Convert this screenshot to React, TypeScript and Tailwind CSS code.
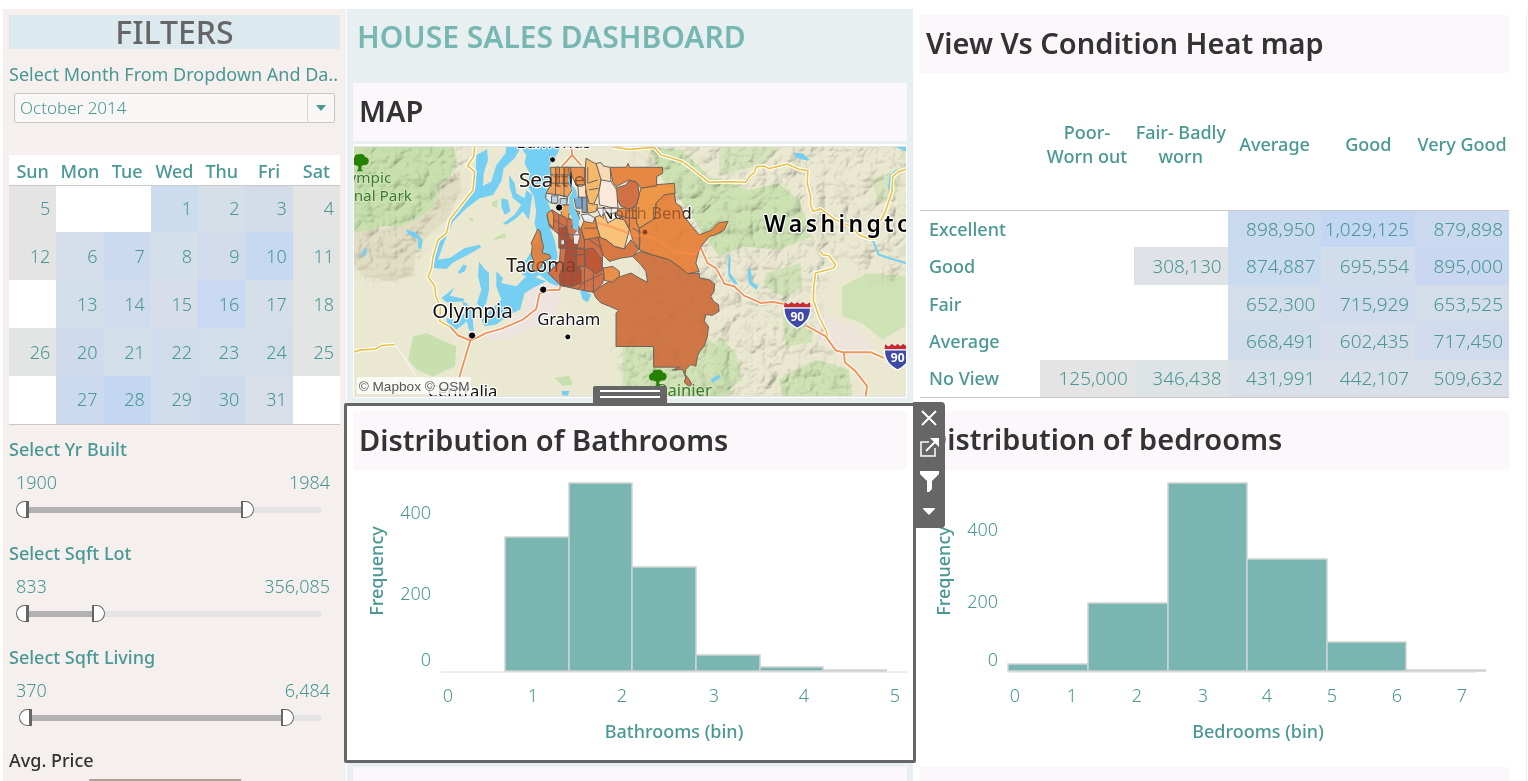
import React, { useId, useState } from "react";

type Cell = { text: string; tone: string };

const c = (text: string, tone = "bg-white"): Cell => ({ text, tone });

const weekdays = ["Sun", "Mon", "Tue", "Wed", "Thu", "Fri", "Sat"];

const weeks: Cell[][] = [
  [c("5", "bg-[#e4e4e4]"), c(""), c(""), c("1", "bg-[#cddbee]"), c("2", "bg-[#d5dfe7]"), c("3", "bg-[#d3dde9]"), c("4", "bg-[#e4e4e4]")],
  [c("12", "bg-[#e4e4e4]"), c("6", "bg-[#d3deea]"), c("7", "bg-[#ccdaf0]"), c("8", "bg-[#d3dfe9]"), c("9", "bg-[#d1dbec]"), c("10", "bg-[#c7d8f1]"), c("11", "bg-[#e2e4e4]")],
  [c(""), c("13", "bg-[#d2deea]"), c("14", "bg-[#d0dbed]"), c("15", "bg-[#d8dee9]"), c("16", "bg-[#c9d9f1]"), c("17", "bg-[#d6deea]"), c("18", "bg-[#e2e5e4]")],
  [c("26", "bg-[#e2e5e4]"), c("20", "bg-[#cfdbed]"), c("21", "bg-[#d3dfe8]"), c("22", "bg-[#d0dbec]"), c("23", "bg-[#d2deea]"), c("24", "bg-[#d4dee9]"), c("25", "bg-[#e2e5e4]")],
  [c(""), c("27", "bg-[#ccdaef]"), c("28", "bg-[#c3d6f2]"), c("29", "bg-[#d1dcec]"), c("30", "bg-[#cddbed]"), c("31", "bg-[#d8dfe9]"), c("")],
];

const conditions = ["Poor-\nWorn out", "Fair- Badly\nworn", "Average", "Good", "Very Good"];

const views: { name: string; cells: Cell[] }[] = [
  { name: "Excellent", cells: [c(""), c(""), c("898,950", "bg-[#c9d9f0]"), c("1,029,125", "bg-[#c3d6f2]"), c("879,898", "bg-[#cad9f0]")] },
  { name: "Good", cells: [c(""), c("308,130", "bg-[#dfe2e6]"), c("874,887", "bg-[#cadaef]"), c("695,554", "bg-[#d2ddec]"), c("895,000", "bg-[#c9d8f0]")] },
  { name: "Fair", cells: [c(""), c(""), c("652,300", "bg-[#d3deea]"), c("715,929", "bg-[#d0dbed]"), c("653,525", "bg-[#d3deea]")] },
  { name: "Average", cells: [c(""), c(""), c("668,491", "bg-[#d2ddeb]"), c("602,435", "bg-[#d5deea]"), c("717,450", "bg-[#d0dbed]")] },
  { name: "No View", cells: [c("125,000", "bg-[#e4e4e4]"), c("346,438", "bg-[#dee3e5]"), c("431,991", "bg-[#d9e0e8]"), c("442,107", "bg-[#d9e0e8]"), c("509,632", "bg-[#d8dfe9]")] },
];

function PanelTitle({ children, tall = false }: { children: React.ReactNode; tall?: boolean }) {
  return (
    <h2
      className={`flex shrink-0 items-center bg-[#fbf7fb] px-[6px] pb-[2px] text-[29px] leading-[36px] font-semibold whitespace-nowrap text-[#333333] ${tall ? "h-[59px]" : "h-[58px]"}`}
    >
      {children}
    </h2>
  );
}

type RangeProps = { label: string; min: number; max: number; from: number; to: number; grouped?: boolean };

const rangeInput =
  "pointer-events-none absolute inset-0 m-0 h-[17px] w-full appearance-none bg-transparent outline-none [&::-webkit-slider-thumb]:pointer-events-auto [&::-webkit-slider-thumb]:h-[17px] [&::-webkit-slider-thumb]:w-[13px] [&::-webkit-slider-thumb]:appearance-none [&::-webkit-slider-thumb]:border-[#666666] [&::-webkit-slider-thumb]:bg-white";

function RangeFilter({ label, min, max, from, to, grouped = true }: RangeProps) {
  const id = useId();
  const [low, setLow] = useState(from);
  const [high, setHigh] = useState(to);
  const share = (v: number) => ((v - min) / (max - min)) * 96;
  const show = (v: number) => (grouped ? Math.round(v).toLocaleString("en-US") : String(Math.round(v)));
  return (
    <div>
      <label htmlFor={id} className="block text-[18px] leading-6 font-medium">
        {label}
      </label>
      <div className="mt-[9px] flex justify-between pr-[10px] pl-[7px] text-[18px] leading-6 font-light">
        <span>{show(low)}</span>
        <span>{show(high)}</span>
      </div>
      <div className="relative mt-[7px] mr-[19px] ml-[7px] h-[17px]">
        <div className="absolute inset-x-0 top-[6px] ml-[10px] h-[6px] bg-[#e5e4e4]" />
        <div
          className="absolute top-[6px] ml-[6px] h-[6px] bg-[#b2b2b2]"
          style={{ left: `${share(low)}%`, width: `${share(high) - share(low)}%` }}
        />
        <input
          id={id}
          type="range"
          step="any"
          min={min}
          max={max}
          value={low}
          onChange={(e) => setLow(Math.min(Number(e.target.value), high))}
          className={`${rangeInput} [&::-webkit-slider-thumb]:rounded-l-full [&::-webkit-slider-thumb]:border [&::-webkit-slider-thumb]:border-r-[3px]`}
        />
        <input
          type="range"
          aria-label={`${label} maximum`}
          step="any"
          min={min}
          max={max}
          value={high}
          onChange={(e) => setHigh(Math.max(Number(e.target.value), low))}
          className={`${rangeInput} [&::-webkit-slider-thumb]:rounded-r-full [&::-webkit-slider-thumb]:border [&::-webkit-slider-thumb]:border-l-2`}
        />
      </div>
    </div>
  );
}

function Filters() {
  return (
    <aside className="flex flex-col border-r border-white bg-[#f5efee] px-[6px] pt-[6px]">
      <h2 className="flex h-[34px] items-center justify-center bg-[#dce9ef] text-[32px] font-medium text-[#666666]">FILTERS</h2>
      <label htmlFor="month" className="mt-[13px] block text-[18px] leading-6 whitespace-nowrap">
        Select Month From Dropdown And Da..
      </label>
      <div className="relative mx-[5px] mt-[7px]">
        <select
          id="month"
          defaultValue="October 2014"
          className="h-[30px] w-full appearance-none rounded-xs border border-[#c8c8c8] bg-[#f9f7f5] px-[5px] text-[17px] font-light text-[#499894]"
        >
          <option>October 2014</option>
          <option>November 2014</option>
        </select>
        <span className="pointer-events-none absolute inset-y-[1px] right-[1px] flex w-[27px] items-center justify-center border-l border-[#d8d6d5]">
          <svg width="10" height="6" viewBox="0 0 10 6" aria-hidden="true">
            <path d="M0 0h10L5 6z" fill="#499894" />
          </svg>
        </span>
      </div>

      <table className="mt-[32px] w-full table-fixed border-collapse border-b border-[#c8c8c8] bg-white text-[18px]">
        <thead>
          <tr className="h-[30px] border-b border-[#c8c8c8]">
            {weekdays.map((d) => (
              <th key={d} className="p-0 pt-[2px] text-center leading-6 font-medium">
                {d}
              </th>
            ))}
          </tr>
        </thead>
        <tbody>
          {weeks.map((week, i) => (
            <tr key={i} className="h-[48px] first:h-[47px]">
              {week.map((day, j) => (
                <td key={j} className={`p-0 pr-[6px] text-right font-light ${day.tone}`}>
                  {day.text}
                </td>
              ))}
            </tr>
          ))}
        </tbody>
      </table>

      <div className="mt-[12px] flex flex-col gap-[23px]">
        <RangeFilter label="Select Yr Built" min={1900} max={2009} from={1900} to={1984} grouped={false} />
        <RangeFilter label="Select Sqft Lot" min={833} max={1367200} from={833} to={356085} />
        <RangeFilter label="Select Sqft Living" min={300} max={7115} from={370} to={6484} />
      </div>

      <h3 className="mt-[22px] text-[18px] leading-6 font-medium text-[#333333]">Avg. Price</h3>
      <div className="mt-[7px] mr-[99px] ml-[80px] h-[20px] shrink-0 bg-[#aaa593]" />
    </aside>
  );
}

function Shield({ x, y }: { x: number; y: number }) {
  return (
    <g transform={`translate(${x} ${y})`}>
      <path d="M3 3Q14 12 24 3Q34 6 41 3Q48 6 58 3Q68 12 79 3Q90 56 41 80Q-8 56 3 3Z" fill="#3f4aa8" stroke="#fff" strokeWidth="4" />
      <path d="M3 2L14 9L24 1L33 8L41 1L49 8L58 1L68 9L79 2L81 17H1Z" fill="#c92a2d" />
      <path d="M1 19H81" stroke="#fff" strokeWidth="4" />
      <text x="41" y="57" textAnchor="middle" fontSize="36" fontWeight="700" fill="#fff">90</text>
    </g>
  );
}

function Tree({ x, y }: { x: number; y: number }) {
  return (
    <path
      transform={`translate(${x} ${y})`}
      fill="#258100"
      d="M-24 10Q-28-4-15-7Q-13-19 0-17Q13-20 17-9Q30-7 28 6Q25 17 13 15L6 19V28L12 34H-8L-3 28V19L-12 15Q-22 17-24 10Z"
    />
  );
}

const halo = { stroke: "#fff", strokeWidth: 7, strokeLinejoin: "round" as const, paintOrder: "stroke" };

function SalesMap() {
  const yellow =
    "M375 15L372 50L353 78L375 95L370 150L335 195L300 240L290 280L265 300L250 350L245 385L235 412L255 440L258 470L272 500L270 545L302 562M12 637L30 632L78 628L95 618L135 615M790 21L840 28L915 22L935 45L970 55L1000 65L1020 80L1080 127L1140 125L1190 127L1205 105L1215 100L1222 80L1245 78L1260 86L1315 72L1350 88L1377 92L1375 130L1385 170L1385 195L1393 215L1415 207L1460 240L1510 262L1530 285L1560 297L1585 297M1680 86L1650 95L1632 110L1630 155L1610 215L1595 245M1415 335L1422 345L1440 348L1460 375L1455 385L1400 400L1395 440L1393 480L1410 530L1430 570L1440 600";
  const orange =
    "M302 562L325 588L362 603L328 715M362 603L385 593L410 580L455 568L520 540L560 508L570 462L595 452L630 450L637 420M665 15L668 45L637 80L632 200M668 45L695 76M1055 325L1075 370L1100 385L1120 420L1125 432L1155 440L1185 468L1235 490L1275 487L1305 493M1372 558L1430 590L1460 632L1480 638L1565 638L1605 655M1485 638L1488 668L1520 695L1555 740L1550 775";
  return (
    <svg viewBox="12 21 1660 750" className="block h-auto w-full" fontFamily="'Noto Sans', sans-serif" role="img" aria-label="Map of house sales by zip code around Seattle">
      <defs>
        <filter id="relief" x="0" y="0" width="100%" height="100%">
          <feTurbulence type="turbulence" baseFrequency="0.014" numOctaves="3" seed="8" />
          <feDiffuseLighting surfaceScale="20" lightingColor="#fff" diffuseConstant="1.25">
            <feDistantLight azimuth="225" elevation="52" />
          </feDiffuseLighting>
        </filter>
        <filter id="soften">
          <feGaussianBlur stdDeviation="14" />
        </filter>
        <mask id="peaks">
          <g fill="#fff" filter="url(#soften)">
            <path d="M12 0H360L330 150L220 300L190 400L60 440L12 380Z" />
            <path d="M850 0H1680V420L1560 420L1480 330L1400 480L1440 620L1520 771H830L800 620L900 300Z" />
          </g>
        </mask>
      </defs>
      <rect x="12" y="21" width="1660" height="750" fill="#eae8d1" />
      <path d="M12 280L60 268L150 262L210 220L260 130L330 90L335 150L290 240L230 290L195 350L190 410L120 425L40 410L12 370Z" fill="#ddd8bd" opacity=".7" />
      <g fill="#c8e0ae">
        <path d="M12 21H310L322 60L300 110L270 135L250 200L205 235L150 262L110 258L60 270L12 280Z" />
        <path d="M190 590L230 580L270 600L320 620L315 680L250 712L200 690L175 660Z" />
        <path d="M820 615L930 560L1010 690L1080 600L1140 640L1150 771H820Z" opacity=".75" />
        <path d="M900 21L1000 30L1080 110L1200 150L1290 130L1350 180L1390 290L1290 330L1180 320L1110 350L1060 280L1010 200L940 120Z" opacity=".85" />
        <path d="M1250 400L1355 370L1360 440L1310 475L1245 440Z" opacity=".7" />
        <path d="M1480 440L1560 400L1670 410V560L1600 600L1540 550L1480 530Z" opacity=".8" />
        <path d="M1300 530L1400 560L1385 610L1310 620Z" opacity=".75" />
        <path d="M1290 720L1400 660L1500 690L1510 771H1300Z" opacity=".8" />
        <path d="M1110 590L1160 640L1180 720L1110 771H1080Z" opacity=".8" />
        <path d="M1570 120L1660 80L1640 170L1590 190Z" opacity=".6" />
        <path d="M1110 21L1290 21L1250 70L1110 110Z" opacity=".6" />
        <path d="M430 185L445 180L442 205L425 198ZM430 298L465 280L470 292L440 300ZM355 240L368 232L372 245ZM615 715L660 710L670 735L640 740Z" />
      </g>
      <path d="M540 420L640 440L620 520L560 560L470 600L400 600L440 570L520 520Z" fill="#eee4df" />
      <path d="M1400 520L1520 560L1580 640L1480 660L1410 600Z" fill="#eee4df" opacity=".8" />
      <g mask="url(#peaks)" opacity=".27" style={{ mixBlendMode: "multiply" }}>
        <rect x="12" y="21" width="1660" height="750" filter="url(#relief)" />
      </g>
      <g fill="#75cff2">
        <path d="M380 45L412 28L415 60L402 100L400 138L425 125L440 75L468 40L470 21H515L495 55L462 85L455 125L430 165L390 175L350 205L310 245L290 290L275 330L265 360L300 355L345 325L390 315L395 322L355 345L310 368L290 388L250 385L255 350L268 310L292 270L300 240L335 200L370 160L378 110Z" />
        <path d="M512 21H632L625 40L600 75L605 120L590 165L600 200L605 215L600 260L615 300L625 350L605 400L640 445L600 430L570 405L545 420L520 405L500 380L530 360L545 335L568 300L555 250L560 215L553 170L535 140L540 100L525 70L530 45Z" />
        <path d="M478 105L495 130L500 160L525 175L530 150L548 165L538 240L520 215L500 235L470 255L460 250L495 225L515 195L490 175L480 140Z" />
        <path d="M455 175L475 180L482 215L465 225L455 200Z" />
        <path d="M388 365L402 385L418 400L418 450L410 490L395 512L382 490L395 450L385 410Z" />
        <path d="M275 475L315 443L300 468L345 478L340 486L290 488Z" />
        <path d="M440 395L460 415L455 430L500 440L535 405L590 425L560 440L525 460L512 510L480 525L440 555L405 560L395 540L430 505L455 480L440 440Z" />
        <path d="M338 485L352 492L368 520L372 575L358 572L348 530Z" />
        <path d="M290 535L330 545L345 515L352 545L320 570L295 565Z" />
        <path d="M325 398L340 375L352 378L345 395L330 402Z" />
        <path d="M168 268L200 280L218 300L214 330L205 325L205 298L175 285Z" />
        <path d="M48 318L50 340L40 352L33 350Z" />
        <path d="M692 455L705 450L725 465L715 488L700 480Z" />
        <path d="M635 755H660L655 768H640Z" />
        <path d="M1140 340L1145 355L1143 400L1168 435L1155 432L1138 410L1136 375Z" />
        <path d="M1200 380L1207 400L1208 425L1227 440L1222 450L1200 432L1195 405Z" />
        <path d="M1335 38L1360 40L1382 58L1375 62L1338 52Z" />
        <path d="M1640 21H1672V34Z" />
        <path d="M1085 720L1110 705L1115 715L1090 730Z" />
      </g>
      <path d="M1573 303L1590 345L1620 355L1672 370M1622 150L1625 112L1645 90" fill="none" stroke="#75cff2" strokeWidth="6" />
      <path d="M135 615L165 655L200 715L230 760" fill="none" stroke="#f7f3f0" strokeWidth="4" />
      <g fill="none" strokeLinejoin="round">
        <path d={yellow} stroke="#fff" strokeWidth="12" />
        <path d={yellow} stroke="#e9c248" strokeWidth="5" />
        <path d={orange} stroke="#fff" strokeWidth="12" />
        <path d={orange} stroke="#f09458" strokeWidth="6" />
      </g>

      <g fill="#111">
        <text x="500" y="23" fontSize="51" {...halo}>Edmonds</text>
        <text x="508" y="140" fontSize="62" {...halo}>Seattle</text>
        <text x="470" y="397" fontSize="58" {...halo}>Tacoma</text>
        <text x="755" y="239" fontSize="50" {...halo}>North Bend</text>
      </g>

      <g transform="translate(540 0)" stroke="#6b625a" strokeWidth="3" strokeLinejoin="round" fillOpacity=".9">
        <path fill="#cd6a39" d="M333 335L368 345L420 360L455 385L475 402L510 400L512 415L540 420L556 432L555 455L545 470L553 485L568 495L570 515L550 527L530 525L525 545L538 560L535 590L525 620L512 635L505 650L500 680L485 675L470 690L468 705L480 720L488 735L478 740L465 728L470 715L460 690L430 692L450 683H373V621H260V520L268 512L240 500L215 490L200 475L192 458L215 440L235 428L270 412L305 400L330 415L355 428L350 395L335 375L310 350Z" />
        <path fill="#e57c33" d="M330 265L378 235L380 190L405 165L435 158L440 190L455 200L465 230L490 262L510 285L545 272L570 248L597 245L585 270L560 285L540 290L520 315L510 330L500 370L510 395L475 402L455 385L420 360L368 345L330 330L332 300Z" />
        <path fill="#f08e39" d="M335 145L375 135L435 130L438 160L405 165L380 190L378 235L330 265L322 250L320 200L328 170Z" />
        <path fill="#e57c33" d="M242 82H290L297 70L300 82H400V100L382 110V138L335 145L320 125L295 122L260 140L250 125Z" />
        <path fill="#cd6535" d="M258 145L290 135L300 120L325 130L330 165L322 195L300 208L275 200L262 175Z" />
        <path fill="#f6b461" d="M168 82L170 55L182 62L205 75L215 120L208 160L190 200L178 190L168 150Z" />
        <path fill="#f8d9b2" d="M200 70L215 68L222 78L242 82L245 125L225 128L215 120Z" />
        <path fill="#fdeada" d="M215 120L245 125L262 150L266 205L245 203L210 195L208 160Z" />
        <path fill="#f9be70" d="M197 232L225 222L235 250L260 235L285 240L300 270L292 300L285 328L255 320L230 300L213 295L205 270Z" />
        <path fill="#e57c33" d="M265 205L300 208L320 200L322 250L330 265V330L310 300L300 265L285 240L262 225Z" />
        <path fill="#d66d34" d="M205 290L230 300L255 320L285 328L305 300L328 330L310 350L275 355L240 365L215 340Z" />
        <path fill="#cf6337" d="M55 400L90 365L95 290L60 260L52 225L68 210L90 225L130 240L150 262L165 300L205 290L220 340L218 375L225 405L220 430L192 458L150 450L95 438Z" />
        <path fill="#ab4a32" d="M88 265L112 262L118 290L145 318L138 345L155 395L155 430L130 440L92 438L90 405L104 370L110 325H88Z" />
        <path fill="#bb5535" d="M165 330L190 325L218 360L218 390L200 402L168 380Z" />
        <path fill="#c45c35" d="M140 325L165 330L168 380H140Z" />
        <path fill="#e8853c" d="M222 385L250 380L270 395V410L250 428L225 422Z" />
        <path fill="#e57c33" d="M165 240L195 235L205 270L212 292L165 300L155 265Z" />
        <path fill="#ef9a50" d="M63 82H125L118 130L128 150L115 170L50 160L66 130Z" />
        <path fill="#e8873f" d="M122 82H165V135H140L128 110Z" />
        <path fill="#e57c33" d="M78 82H90V132H78ZM104 82H118V132H104Z" />
        <path fill="#fbe0c0" d="M145 135H168L172 175H148Z" />
        <path fill="#f6b461" d="M168 150L178 190L205 195L200 215L175 220L172 180Z" />
        <path fill="#dfe7ef" d="M50 160L85 165L115 172L110 198L62 188L48 175Z" />
        <path fill="#b9cee2" d="M66 168H85V190H66ZM92 176H112V198H92Z" />
        <path fill="#709fcd" d="M133 172H158V205H140ZM158 172H172V218H158Z" />
        <path fill="#5f98cc" d="M130 205L142 212L150 235L140 255L125 262L138 238Z" />
        <path fill="#eef2f6" d="M155 225L175 222L197 235L190 250L165 245ZM202 205L265 205V218L240 222L230 215L215 232Z" />
        <path fill="#f29a4c" d="M95 195H125V215H150V222H118V240L95 225Z" />
        <path fill="#f3a04f" d="M52 222L65 210L72 225V265L58 250Z" />
        <path fill="#f2f2f2" d="M132 298L130 285L145 270L152 290L145 315L132 312ZM94 300H105V315H94Z" />
        <path fill="#75cff2" stroke="none" fillOpacity="1" d="M118 95L122 130L140 150L145 175L130 175L135 205L150 235L145 275L130 265L128 235L118 215L120 170L130 155L115 125Z" />
        <path fill="#e57c33" d="M8 320L5 310L18 282L25 268L33 275L35 295L42 320L38 340L60 345L64 355L40 365L35 380L20 395L8 388L12 362L5 345Z" />
        <path fill="none" d="M62 105H125M60 130H118M78 82V165M104 82V172M88 225V265M112 240V325M88 285H150M90 325H165M118 345H165M140 325V400M104 370V440M130 395V440M165 300V450M180 300L215 325M192 400V458M145 450L160 430L218 402M72 240L112 262M165 265H205M262 225L300 235L322 235M300 208V265M310 265L335 278M175 82V130L205 120M178 150L208 145" />
      </g>
      <path d="M745 250L790 262L850 285L910 292L975 335L1035 345L1055 325" fill="none" stroke="#ff8a4a" strokeOpacity=".55" strokeWidth="7" />
      <circle cx="887" cy="277" r="7" fill="#8f3c1c" />

      <g fill="#4f2b17" aria-hidden="true">
        <text x="508" y="140" fontSize="62" opacity=".45">Seattle</text>
        <text x="470" y="397" fontSize="58" opacity=".45">Tacoma</text>
        <text x="755" y="239" fontSize="50" opacity=".35">North Bend</text>
      </g>
      <g fill="#111">
        <text x="247" y="536" fontSize="62" {...halo}>Olympia</text>
        <text x="563" y="556" fontSize="50" {...halo}>Graham</text>
        <text x="443" y="773" fontSize="50" textAnchor="end" {...halo}>Centralia</text>
        <text x="1245" y="276" fontSize="69" fontWeight="600" fill="#000" className="tracking-[0.15em]" {...halo}>Washington</text>
      </g>
      <g fill="#3b7a2a" fontSize="46" textAnchor="end" stroke="#d5e7c2" strokeWidth="5" paintOrder="stroke">
        <text x="124" y="130">Olympic</text>
        <text x="186" y="184">National Park</text>
        <text x="1088" y="771" fontSize="50">Rainier</text>
      </g>
      <g fill="#000" stroke="#fff" strokeWidth="3">
        <circle cx="367" cy="588" r="11" />
        <circle cx="609" cy="59" r="9" />
        <circle cx="629" cy="203" r="11" />
        <circle cx="581" cy="450" r="11" />
        <circle cx="655" cy="592" r="9" />
      </g>
      <Tree x={28} y={60} />
      <Tree x={924} y={708} />
      <Shield x={1304} y={486} />
      <Shield x={1606} y={612} />
      <rect x="21" y="713" width="342" height="51" fill="#fff" fillOpacity=".8" />
      <text x="26" y="755" fontSize="41" fill="#555" fontFamily="'Liberation Sans', sans-serif">© Mapbox © OSM</text>
    </svg>
  );
}

type Bar = [left: number, right: number, top: number];
type Tick = [position: number, label: string];

type HistogramProps = {
  viewBox: string;
  bars: Bar[];
  axis: [number, number];
  tail: [number, number];
  yTicks: Tick[];
  yEdge: number;
  yTitle: number;
  xTicks: Tick[];
  xTitle: [number, string];
};

function Histogram({ viewBox, bars, axis, tail, yTicks, yEdge, yTitle, xTicks, xTitle }: HistogramProps) {
  return (
    <svg viewBox={viewBox} className="block h-auto w-full" fill="#499894" fontSize="18" fontFamily="'Noto Sans', sans-serif" role="img" aria-label={`Histogram of ${xTitle[1]}`}>
      <path d={`M${axis[0]} 672H${axis[1]}`} stroke="#dcdcdc" />
      {bars.map(([l, r, t]) => (
        <rect key={l} x={l} y={t} width={r - l} height={671 - t} fill="#79b6b1" stroke="#cfd3d2" strokeWidth="1.5" />
      ))}
      <path d={`M${tail[0]} 670.5H${tail[1]}`} stroke="#d2d2d2" strokeWidth="2.5" />
      <g fontWeight="300">
        {yTicks.map(([y, label]) => (
          <text key={label} x={yEdge} y={y + 7} textAnchor="end">{label}</text>
        ))}
        {xTicks.map(([x, label]) => (
          <text key={label} x={x} y="702" textAnchor="middle">{label}</text>
        ))}
      </g>
      <g fontWeight="500" textAnchor="middle">
        <text x={xTitle[0]} y="738">{xTitle[1]}</text>
        <text transform={`translate(${yTitle} 571) rotate(-90)`}>Frequency</text>
      </g>
    </svg>
  );
}

function PanelToolbar() {
  return (
    <div className="absolute -top-1 left-full flex h-[126px] w-[32px] flex-col items-center rounded-r-sm bg-[#666666] pt-[5px] text-white">
      <button type="button" aria-label="Remove from dashboard" className="flex h-[22px] w-full items-center justify-center">
        <svg width="16" height="16" viewBox="0 0 16 16" fill="none" stroke="currentColor" strokeWidth="2">
          <path d="M1 1L15 15M15 1L1 15" />
        </svg>
      </button>
      <button type="button" aria-label="Go to sheet" className="mt-[6px] flex h-[24px] w-full items-center justify-center">
        <svg width="19" height="19" viewBox="0 0 19 19" fill="none" stroke="currentColor" strokeWidth="2">
          <path d="M9 4H1V18H15V10" strokeWidth="1.5" />
          <path d="M6 13L16 3" />
          <path d="M10 0H19V9L16 6L13 3Z" fill="currentColor" stroke="none" />
        </svg>
      </button>
      <button type="button" aria-label="Use as filter" className="mt-[9px] flex h-[26px] w-full items-center justify-center">
        <svg width="19" height="21" viewBox="0 0 19 21" fill="currentColor">
          <path d="M0 0H19V3L12 10V18L9 21H7V10L0 3Z" />
        </svg>
      </button>
      <button type="button" aria-label="More options" className="mt-[8px] flex h-[18px] w-full items-center justify-center">
        <svg width="12" height="7" viewBox="0 0 12 7" fill="currentColor">
          <path d="M0 0H12V1L6 7L0 1Z" />
        </svg>
      </button>
    </div>
  );
}

export default function App() {
  return (
    <div className="h-screen overflow-hidden bg-white pt-[9px] pr-[1px] font-['Noto_Sans',sans-serif] text-[#499894]">
      <main className="grid h-full grid-cols-[minmax(0,344fr)_minmax(0,566fr)_minmax(0,596fr)] border-r border-[#f2f2f2] pr-[17px] pl-[3px]">
        <Filters />

        <div className="flex flex-col bg-[#e8eff0] px-[6px]">
          <h1 className="flex h-[74px] shrink-0 items-start px-[4px] pt-[9px] text-[30px] leading-[38px] font-semibold whitespace-nowrap text-[#76b7b2]">
            HOUSE SALES DASHBOARD
          </h1>
          <PanelTitle>MAP</PanelTitle>
          <div className="mt-[3px] border border-t-2 border-white">
            <div className="overflow-hidden border-y border-[#e3e3e3]">
              <SalesMap />
            </div>
          </div>

          <section className="relative z-10 -mx-[9px] mt-[5px] rounded-xs border-[3px] border-[#666666] bg-white px-[6px] pt-[5px]">
            <div className="absolute bottom-full left-1/2 -ml-[37px] flex h-[20px] w-[74px] flex-col items-center gap-[4px] rounded-t-xs bg-[#666666] pt-[4px]">
              <span className="h-[2px] w-[60px] bg-white" />
              <span className="h-[2px] w-[60px] bg-white" />
            </div>
            <PanelTitle tall>Distribution of Bathrooms</PanelTitle>
            <Histogram
              viewBox="353 470 554 290"
              axis={[441, 908]}
              tail={[823, 887]}
              bars={[[505, 569, 537], [569, 632, 483], [632, 696, 567], [696, 760, 655], [760, 823, 667]]}
              yEdge={431}
              yTitle={383}
              yTicks={[[512, "400"], [593, "200"], [659, "0"]]}
              xTicks={[[448, "0"], [533, "1"], [622, "2"], [714, "3"], [804, "4"], [895, "5"]]}
              xTitle={[674, "Bathrooms (bin)"]}
            />
            <PanelToolbar />
          </section>
          <div className="mt-[4px] min-h-[14px] flex-1 bg-[#fbf7fb]" />
        </div>

        <div className="flex flex-col pt-[6px] pl-[7px]">
          <PanelTitle>View Vs Condition Heat map</PanelTitle>
          <table className="w-full table-fixed border-collapse border-b border-[#c8c8c8] text-[18px] leading-6">
            <colgroup>
              <col className="w-[20.4%]" />
            </colgroup>
            <thead>
              <tr className="h-[137px] border-b border-[#c8c8c8]">
                <td className="p-0" />
                {conditions.map((name) => (
                  <th key={name} className="p-0 pt-[6px] text-center font-medium whitespace-pre">
                    {name}
                  </th>
                ))}
              </tr>
            </thead>
            <tbody>
              {views.map((view) => (
                <tr key={view.name} className="odd:h-[37px] even:h-[38px]">
                  <th className="p-0 pl-[9px] text-left font-medium">{view.name}</th>
                  {view.cells.map((cell, i) => (
                    <td key={i} className={`p-0 pr-[6px] text-right text-[19px] font-light ${cell.tone}`}>
                      {cell.text}
                    </td>
                  ))}
                </tr>
              ))}
            </tbody>
          </table>
          <section className="mt-[13px]">
            <PanelTitle tall>Distribution of bedrooms</PanelTitle>
            <Histogram
              viewBox="920 470 589 290"
              axis={[1008, 1477]}
              tail={[1406, 1486]}
              bars={[[1008, 1088, 664], [1088, 1168, 603], [1168, 1247, 483], [1247, 1327, 559], [1327, 1406, 642]]}
              yEdge={998}
              yTitle={950}
              yTicks={[[529, "400"], [601, "200"], [659, "0"]]}
              xTicks={[[1015, "0"], [1072, "1"], [1137, "2"], [1203, "3"], [1267, "4"], [1332, "5"], [1397, "6"], [1462, "7"]]}
              xTitle={[1258, "Bedrooms (bin)"]}
            />
          </section>
          <div className="mt-[7px] min-h-[14px] flex-1 bg-[#fbf7fb]" />
        </div>
      </main>
    </div>
  );
}
